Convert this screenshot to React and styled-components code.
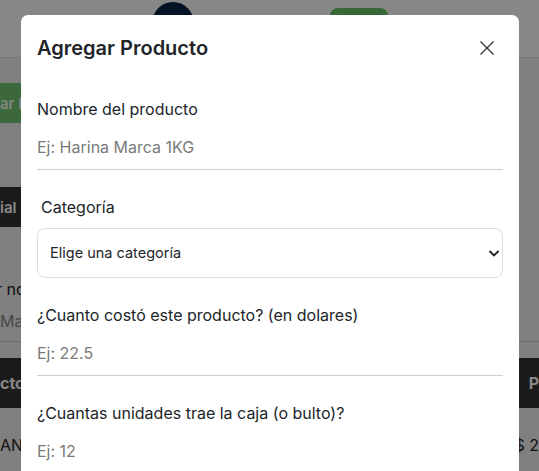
import styled, { createGlobalStyle } from "styled-components";

const GlobalStyle = createGlobalStyle`
  html, body {
    margin: 0;
    padding: 0;
    overflow: hidden;
    background: #f1f1f1;
    font-family: Inter, "Noto Sans", sans-serif;
  }
  * { box-sizing: border-box; }
`;

/* ---------- page behind the modal ---------- */

const Page = styled.div`
  width: 539px;
  height: 471px;
  overflow: hidden;
`;

const Navbar = styled.div`
  height: 58px;
  background: #fff;
  display: flex;
  align-items: flex-start;
  border-bottom: 1px solid #e4e4e4;
`;

const Avatar = styled.div`
  width: 42px;
  height: 42px;
  margin: 2px 0 0 152px;
  border-radius: 50%;
  background: #0b2747;
`;

const NavButton = styled.div`
  width: 58px;
  height: 40px;
  margin: 8px 0 0 136px;
  border-radius: 8px;
  background: #6ac36a;
`;

const Main = styled.div`
  padding-top: 25px;
  display: flex;
  flex-direction: column;
`;

const PageButton = styled.div`
  height: 40px;
  width: 200px;
  display: flex;
  align-items: center;
  font-size: 15px;
  font-weight: 600;
  color: ${(p) => (p.$dark ? "#fff" : "#f4fff4")};
  background: ${(p) => (p.$dark ? "#333" : "#72c472")};
  margin-bottom: ${(p) => p.$mb || 0}px;
`;

const SearchLabel = styled.div`
  font-size: 16px;
  color: #222;
  height: 20px;
  line-height: 20px;
  margin-left: -4px;
`;

const SearchInput = styled.div`
  height: 41px;
  margin-top: 2px;
  border-bottom: 1px solid #ccc;
  display: flex;
  align-items: center;
  font-size: 16px;
  color: #888;
`;

const TableHead = styled.div`
  height: 50px;
  margin-top: 16px;
  background: #333;
  color: #fff;
  font-size: 16px;
  font-weight: 700;
  display: flex;
  align-items: center;
  justify-content: space-between;
`;

const TableRow = styled.div`
  height: 74px;
  display: flex;
  align-items: center;
  justify-content: space-between;
  font-size: 16px;
  color: #222;
`;

/* ---------- modal ---------- */

const Backdrop = styled.div`
  position: fixed;
  inset: 0;
  background: rgba(0, 0, 0, 0.47);
  overflow: hidden;
`;

const Modal = styled.div`
  width: 498px;
  margin: 15px 0 0 21px;
  background: #fff;
  border-radius: 7px;
  color: #212529;
`;

const Header = styled.div`
  display: flex;
  align-items: center;
  justify-content: space-between;
  padding: 18px 16px;
`;

const Title = styled.h1`
  margin: 0;
  font-size: 20px;
  font-weight: 600;
  line-height: 30px;
`;

const Close = styled.button`
  border: none;
  background: transparent;
  padding: 0;
  width: 16px;
  height: 16px;
  margin-right: 8px;
  display: flex;
  align-items: center;
  justify-content: center;
  cursor: pointer;
`;

const Body = styled.div`
  padding: 16px 16px 40px;
`;

const Field = styled.div`
  display: flex;
  flex-direction: column;
  margin-bottom: 25px;
`;

const Label = styled.label`
  font-size: 16px;
  font-weight: 400;
  line-height: 24px;
  padding-left: ${(p) => p.$indent || 0}px;
  margin-bottom: ${(p) => p.$mb || 0}px;
`;

const Input = styled.input`
  border: none;
  border-bottom: 1px solid #cfcfcf;
  outline: none;
  padding: 14px 0 10px;
  font-family: inherit;
  font-size: 16px;
  line-height: 24px;
  height: 49px;
  color: #212529;
  &::placeholder {
    color: #7a7a7a;
  }
`;

const SelectWrap = styled.div`
  position: relative;
`;

const Select = styled.select`
  width: 100%;
  height: 50px;
  appearance: none;
  -webkit-appearance: none;
  border: 1px solid #dcdcdc;
  border-radius: 8px;
  background: #fff;
  padding: 0 32px 1px 12px;
  font-family: inherit;
  font-size: 14.5px;
  color: #212529;
  outline: none;
`;

const Chevron = styled.svg`
  position: absolute;
  right: 2px;
  top: 19px;
  pointer-events: none;
`;

export default function App() {
  return (
    <>
      <GlobalStyle />
      <Page>
        <Navbar>
          <Avatar />
          <NavButton />
        </Navbar>
        <Main>
          <PageButton $mb={64}>ar Producto</PageButton>
          <PageButton $dark $mb={52}>ial</PageButton>
          <SearchLabel>r nombre</SearchLabel>
          <SearchInput>Marca</SearchInput>
          <TableHead>
            <span>cto</span>
            <span>P</span>
          </TableHead>
          <TableRow>
            <span>AN</span>
            <span>$ 2</span>
          </TableRow>
        </Main>
      </Page>

      <Backdrop>
        <Modal>
          <Header>
            <Title>Agregar Producto</Title>
            <Close aria-label="Cerrar">
              <svg width="16" height="16" viewBox="0 0 16 16">
                <path d="M1.5 1.5 L14.5 14.5 M14.5 1.5 L1.5 14.5" stroke="#333" strokeWidth="1.3" fill="none" />
              </svg>
            </Close>
          </Header>
          <Body>
            <Field>
              <Label>Nombre del producto</Label>
              <Input placeholder="Ej: Harina Marca 1KG" />
            </Field>
            <Field>
              <Label $indent={4} $mb={9}>Categoría</Label>
              <SelectWrap>
                <Select defaultValue="">
                  <option value="">Elige una categoría</option>
                </Select>
                <Chevron width="14" height="12" viewBox="0 0 14 12">
                  <path d="M2.5 4 L7 8.5 L11.5 4" stroke="#222" strokeWidth="1.8" fill="none" />
                </Chevron>
              </SelectWrap>
            </Field>
            <Field>
              <Label>¿Cuanto costó este producto? (en dolares)</Label>
              <Input placeholder="Ej: 22.5" />
            </Field>
            <Field>
              <Label>¿Cuantas unidades trae la caja (o bulto)?</Label>
              <Input placeholder="Ej: 12" />
            </Field>
          </Body>
        </Modal>
      </Backdrop>
    </>
  );
}
